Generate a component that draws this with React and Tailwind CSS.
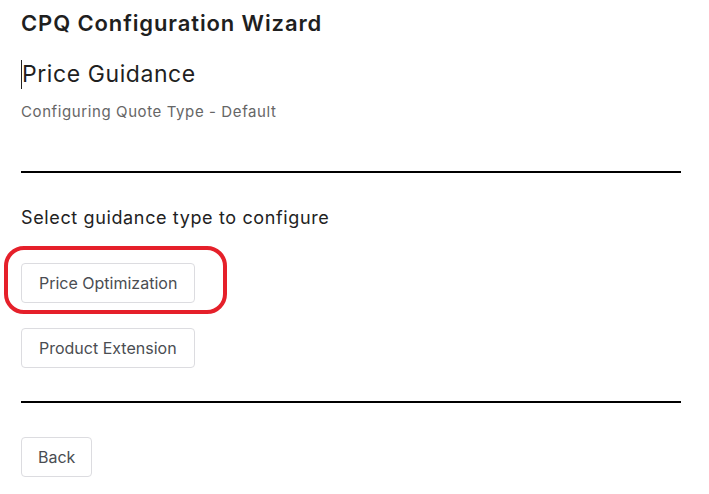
import React from 'react';

const OptionButton = ({ label, wide = true }) => (
  <button
    className={`h-10 rounded border border-[#dcdce0] bg-white text-[16px] text-[#4a4d52] leading-none ${
      wide ? 'px-[17px]' : 'px-4'
    }`}
  >
    {label}
  </button>
);

const App = () => {
  return (
    <div className="w-[709px] h-[494px] bg-white pl-[21px] pr-[28px] font-['Inter',sans-serif] text-[#1f1f1f]">
      <h1 className="pt-[9px] text-[22px] font-semibold leading-[28px] tracking-[0.04em]">CPQ Configuration Wizard</h1>

      <div className="mt-[23px] flex items-center">
        <span className="w-px h-[29px] bg-[#222] -mr-px" />
        <h2 className="text-[23px] leading-[29px] pl-px tracking-[0.025em]">Price Guidance</h2>
      </div>
      <p className="mt-[13px] text-[15px] leading-5 text-[#666] tracking-[0.04em]">Configuring Quote Type - Default</p>

      <hr className="mt-[49px] border-0 h-[2px] bg-black" />

      <h3 className="mt-[33px] text-[18px] leading-6 text-[#222] tracking-[0.035em]">Select guidance type to configure</h3>

      <div className="mt-[33px] flex flex-col items-start gap-[25px]">
        <div className="relative">
          <OptionButton label="Price Optimization" />
          <span className="pointer-events-none absolute -left-[17px] -top-[17px] w-[223px] h-[68px] rounded-[20px] border-[4px] border-[#e5202a]" />
        </div>
        <OptionButton label="Product Extension" />
      </div>

      <hr className="mt-[33px] border-0 h-[2px] bg-black" />

      <div className="mt-[34px]">
        <OptionButton label="Back" wide={false} />
      </div>
    </div>
  );
};

export default App;
